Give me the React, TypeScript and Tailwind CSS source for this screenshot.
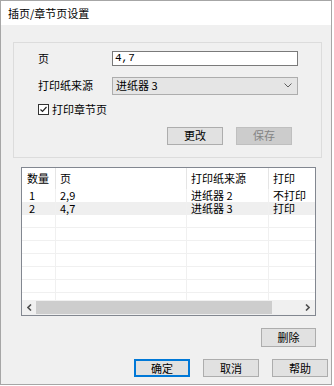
const font = { fontFamily: '"Noto Sans CJK SC", "Noto Sans", sans-serif' };

const rows = [
  { n: "1", pages: "2,9", tray: "进纸器 2", print: "不打印", selected: false },
  { n: "2", pages: "4,7", tray: "进纸器 3", print: "打印", selected: true },
];

function Btn({ label, primary, disabled, w = "w-[56px]", h = "h-[18px]" }: { label: string; primary?: boolean; disabled?: boolean; w?: string; h?: string }) {
  return (
    <div
      className={`${w} ${h} flex items-center justify-center text-[11px] border ${
        disabled
          ? "bg-[#cccccc] border-[#bfbfbf] text-[#838383]"
          : primary
          ? "bg-[#e1e1e1] border-[#0078d7] shadow-[inset_0_0_0_1px_#0078d7] text-black"
          : "bg-[#e1e1e1] border-[#adadad] text-black"
      }`}
    >
      {label}
    </div>
  );
}

function Chevron({ dir }: { dir: "left" | "right" | "down" }) {
  if (dir === "down")
    return (
      <svg width="8" height="5" viewBox="0 0 8 5">
        <path d="M0.5 0.5 L4 4 L7.5 0.5" fill="none" stroke="#606060" strokeWidth="1" />
      </svg>
    );
  return (
    <svg width="5" height="7" viewBox="0 0 5 7">
      <path
        d={dir === "left" ? "M4 0.5 L1 3.5 L4 6.5" : "M1 0.5 L4 3.5 L1 6.5"}
        fill="none"
        stroke="#505050"
        strokeWidth="1.6"
      />
    </svg>
  );
}

function Cells({ a, b, c, d, header }: { a: string; b: string; c: string; d: string; header?: boolean }) {
  const line = header ? "border-[#e5e5e5]" : "border-[#f0f0f0]";
  return (
    <>
      <div className={`w-[34px] border-r ${line} pl-[5px] ${header ? "" : "pl-[7px]"}`}>{a}</div>
      <div className={`w-[131px] border-r ${line} pl-[4px]`}>{b}</div>
      <div className={`w-[82px] border-r ${line} pl-[4px]`}>{c}</div>
      <div className="flex-1 pl-[4px]">{d}</div>
    </>
  );
}

export default function App() {
  return (
    <div style={font} className="w-[332px] h-[385px] border border-[#a6a6a6] bg-[#f0f0f0] flex flex-col text-black">
      {/* Title bar */}
      <div className="h-[24px] bg-white flex items-center pl-[7px] text-[11px]">插页/章节页设置</div>

      {/* Group box */}
      <div className="mt-[17px] ml-[12px] w-[309px] h-[116px] border border-[#dcdcdc] flex flex-col text-[11px]">
        <div className="mt-[7px] pl-[24px] flex items-center">
          <div className="w-[74px]">页</div>
          <div className="w-[186px] h-[15px] bg-white border border-[#7a7a7a] flex items-center pl-[2px] text-[11px]" style={{ fontFamily: '"Liberation Mono", monospace' }}>
            4,7
          </div>
        </div>
        <div className="mt-[10px] pl-[24px] flex items-center">
          <div className="w-[74px]">打印纸来源</div>
          <div className="w-[186px] h-[18px] bg-[#e5e5e5] border border-[#adadad] flex items-center justify-between pl-[3px] pr-[5px]">
            <span>进纸器 3</span>
            <Chevron dir="down" />
          </div>
        </div>
        <div className="mt-[8px] pl-[24px] h-[13px] flex items-center gap-[3px]">
          <div className="w-[11px] h-[11px] border border-[#333333] bg-white flex items-center justify-center">
            <svg width="9" height="9" viewBox="0 0 9 9">
              <path d="M1.5 4.5 L3.5 6.5 L7.5 2" fill="none" stroke="#222" strokeWidth="1.2" />
            </svg>
          </div>
          <span>打印章节页</span>
        </div>
        <div className="mt-[11px] ml-[153px] flex gap-[13px]">
          <Btn label="更改" />
          <Btn label="保存" disabled />
        </div>
      </div>

      {/* List view */}
      <div className="mt-[9px] ml-[20px] w-[295px] h-[149px] border border-[#828790] bg-white flex flex-col text-[11px]">
        <div className="h-[21px] flex items-center [&>div]:h-full [&>div]:flex [&>div]:items-center">
          <Cells a="数量" b="页" c="打印纸来源" d="打印" header />
        </div>
        <div className="flex-1 overflow-hidden">
          {rows.map((r) => (
            <div key={r.n} className={`h-[13px] flex leading-[13px] ${r.selected ? "bg-[#efefef]" : ""}`}>
              <Cells a={r.n} b={r.pages} c={r.tray} d={r.print} />
            </div>
          ))}
          {Array.from({ length: 7 }).map((_, i) => (
            <div key={i} className="h-[13px] flex border-b border-[#f0f0f0]">
              <Cells a="" b="" c="" d="" />
            </div>
          ))}
        </div>
        <div className="h-[15px] bg-[#f0f0f0] flex items-center">
          <div className="w-[14px] flex justify-center">
            <Chevron dir="left" />
          </div>
          <div className="w-[236px] h-[13px] bg-[#cdcdcd]" />
          <div className="flex-1" />
          <div className="w-[15px] flex justify-center">
            <Chevron dir="right" />
          </div>
        </div>
      </div>

      <div className="mt-[12px] flex justify-end mr-[15px]">
        <Btn label="删除" w="w-[55px]" h="h-[19px]" />
      </div>

      <div className="mt-[12px] flex justify-end gap-[13px] mr-[3px]">
        <Btn label="确定" primary />
        <Btn label="取消" />
        <Btn label="帮助" />
      </div>
    </div>
  );
}
